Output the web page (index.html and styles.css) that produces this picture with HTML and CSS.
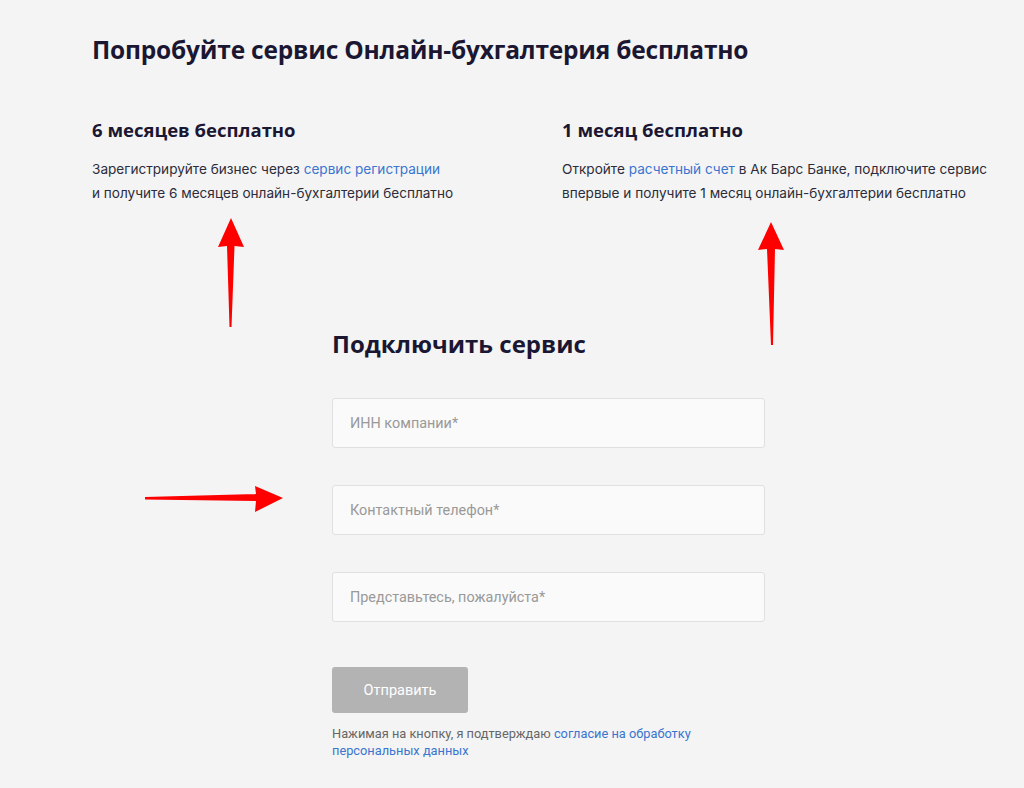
FILE: index.html
```html
<!DOCTYPE html>
<html lang="ru">
<head>
  <meta charset="UTF-8" />
  <meta name="viewport" content="width=device-width, initial-scale=1.0"/>
  <title>Онлайн-бухгалтерия</title>
  <link rel="stylesheet" href="styles.css">
</head>
<body>
  <div class="page">
    <h1>Попробуйте сервис Онлайн-бухгалтерия бесплатно</h1>

    <div class="offers">
      <div class="offer">
        <h3>6 месяцев бесплатно</h3>
        <p>Зарегистрируйте бизнес через <a href="#">сервис регистрации</a><br>
        и получите 6 месяцев онлайн-бухгалтерии бесплатно</p>
      </div>
      <div class="offer">
        <h3>1 месяц бесплатно</h3>
        <p>Откройте <a href="#">расчетный счет</a> в Ак Барс Банке, подключите сервис<br>
        впервые и получите 1 месяц онлайн-бухгалтерии бесплатно</p>
      </div>
    </div>

    <form class="connect" onsubmit="return false">
      <h2>Подключить сервис</h2>
      <input type="text" placeholder="ИНН компании*" />
      <input type="text" placeholder="Контактный телефон*" />
      <input type="text" placeholder="Представьтесь, пожалуйста*" />
      <button type="submit" disabled>Отправить</button>
      <div class="agree">
        Нажимая на кнопку, я подтверждаю <a href="#">согласие на обработку<br>
        персональных данных</a>
      </div>
    </form>
  </div>

  <!-- стрелки поверх страницы -->
  <svg class="arrows" width="1024" height="788" viewBox="0 0 1024 788">
    <g fill="#ff0000">
      <polygon points="231,218 244,247 234.5,246 231.5,327 229.5,327 227,246 218,247" />
      <polygon points="771,222 784,250 775,249 773,345 771,345 767,249 758,250" />
      <polygon points="283,498 255,512 256,501 145,499.5 145,497 256,494 255,486" />
    </g>
  </svg>
</body>
</html>
```

FILE: styles.css
```css
body {
  margin: 0;
  background: #f4f4f4;
  font-family: Roboto, "Liberation Sans", sans-serif;
  color: #333;
}
.page {
  padding: 34px 0 40px 92px;
}
h1, h2, h3 {
  font-family: "Open Sans", "Noto Sans", sans-serif;
  font-weight: 700;
  color: #1b1733;
  margin: 0;
}
h1 {
  font-size: 24.5px;
  line-height: 32px;
  letter-spacing: -0.2px;
}
.offers {
  display: grid;
  grid-template-columns: 470px 470px;
  margin-top: 52px;
}
h3 {
  font-size: 18.5px;
  line-height: 24px;
}
.offer p {
  margin: 15px 0 0;
  font-family: Inter, Roboto, sans-serif;
  font-size: 13.6px;
  line-height: 24px;
  color: #2d2c3a;
}
a {
  color: #3a75d0;
  text-decoration: none;
}
.connect {
  width: 433px;
  margin: 124px 0 0 240px;
  display: flex;
  flex-direction: column;
  align-items: flex-start;
}
h2 {
  font-size: 24px;
  line-height: 30px;
  margin-bottom: 39px;
}
.connect input {
  width: 100%;
  height: 50px;
  box-sizing: border-box;
  padding: 0 17px;
  margin-bottom: 37px;
  background: #fafafa;
  border: 1px solid #e0e0e0;
  border-radius: 3px;
  font-family: Roboto, "Liberation Sans", sans-serif;
  font-size: 14.4px;
  color: #333;
}
.connect input::placeholder {
  color: #999;
}
.connect button {
  margin-top: 8px;
  width: 136px;
  height: 46px;
  border: none;
  border-radius: 3px;
  background: #b3b3b3;
  color: #fff;
  font-family: Roboto, "Liberation Sans", sans-serif;
  font-size: 14.5px;
}
.agree {
  margin-top: 12px;
  font-size: 12.8px;
  line-height: 17px;
  color: #666;
}
.arrows {
  position: absolute;
  top: 0;
  left: 0;
  pointer-events: none;
}
```
